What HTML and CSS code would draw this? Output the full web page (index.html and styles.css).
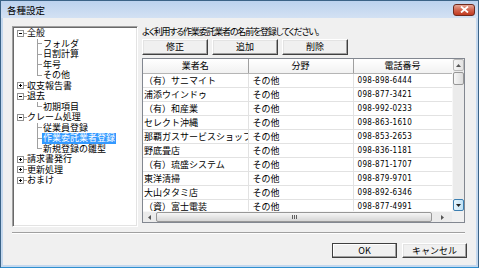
FILE: index.html
```html
<!DOCTYPE html>
<html lang="ja">
<head>
    <meta charset="UTF-8">
    <title>各種設定</title>
    <link rel="stylesheet" href="styles.css">
</head>
<body>
<div class="window">
    <div class="titlebar">
        <span class="title">各種設定</span>
        <span class="close">
            <svg width="9" height="7" viewBox="0 0 9 7"><path d="M1 0.5 L8 6.5 M8 0.5 L1 6.5" stroke="#fff" stroke-width="1.8"/></svg>
        </span>
    </div>
    <div class="client">
        <div class="main">
            <!-- settings tree -->
            <div class="tree">
                <div class="tree-row root"><span class="toggle minus"></span><span class="dash"></span><span>全般</span></div>
                <div class="tree-row child"><span class="branch"></span><span>フォルダ</span></div>
                <div class="tree-row child"><span class="branch"></span><span>日割計算</span></div>
                <div class="tree-row child"><span class="branch"></span><span>年号</span></div>
                <div class="tree-row child"><span class="branch last"></span><span>その他</span></div>
                <div class="tree-row root"><span class="toggle plus"></span><span class="dash"></span><span>収支報告書</span></div>
                <div class="tree-row root"><span class="toggle minus"></span><span class="dash"></span><span>退去</span></div>
                <div class="tree-row child"><span class="branch last"></span><span>初期項目</span></div>
                <div class="tree-row root"><span class="toggle minus"></span><span class="dash"></span><span>クレーム処理</span></div>
                <div class="tree-row child"><span class="branch"></span><span>従業員登録</span></div>
                <div class="tree-row child"><span class="branch"></span><span class="selected">作業委託業者登録</span></div>
                <div class="tree-row child"><span class="branch last"></span><span>新規登録の雛型</span></div>
                <div class="tree-row root"><span class="toggle plus"></span><span class="dash"></span><span>請求書発行</span></div>
                <div class="tree-row root"><span class="toggle plus"></span><span class="dash"></span><span>更新処理</span></div>
                <div class="tree-row root"><span class="toggle plus"></span><span class="dash"></span><span>おまけ</span></div>
            </div>

            <div class="panel">
                <p class="hint">よく利用する作業委託業者の名前を登録してください。</p>
                <div class="toolbar">
                    <button>修正</button>
                    <button>追加</button>
                    <button>削除</button>
                </div>
                <div class="list">
                    <div class="list-view">
                        <table>
                            <colgroup>
                                <col class="col-name">
                                <col class="col-field">
                                <col class="col-tel">
                            </colgroup>
                            <thead>
                            <tr><th>業者名</th><th>分野</th><th>電話番号</th></tr>
                            </thead>
                            <tbody>
                            <tr><td>（有）サニマイト</td><td>その他</td><td class="tel">098-898-6444</td></tr>
                            <tr><td>浦添ウインドゥ</td><td>その他</td><td class="tel">098-877-3421</td></tr>
                            <tr><td>（有）和産業</td><td>その他</td><td class="tel">098-992-0233</td></tr>
                            <tr><td>セレクト沖縄</td><td>その他</td><td class="tel">098-863-1610</td></tr>
                            <tr><td>那覇ガスサービスショップ</td><td>その他</td><td class="tel">098-853-2653</td></tr>
                            <tr><td>野底畳店</td><td>その他</td><td class="tel">098-836-1181</td></tr>
                            <tr><td>（有）琉盛システム</td><td>その他</td><td class="tel">098-871-1707</td></tr>
                            <tr><td>東洋清掃</td><td>その他</td><td class="tel">098-879-9701</td></tr>
                            <tr><td>大山タタミ店</td><td>その他</td><td class="tel">098-892-6346</td></tr>
                            <tr><td>（資）富士電装</td><td>その他</td><td class="tel">098-877-4991</td></tr>
                            </tbody>
                        </table>
                    </div>
                    <div class="vscroll">
                        <span class="sb-btn"><svg width="5" height="3" viewBox="0 0 5 3"><path d="M0 3 L2.5 0 L5 3Z" fill="#555"/></svg></span>
                        <span class="sb-thumb-v"></span>
                        <span class="sb-track"></span>
                        <span class="sb-btn hot"><svg width="5" height="3" viewBox="0 0 5 3"><path d="M0 0 L5 0 L2.5 3Z" fill="#222"/></svg></span>
                    </div>
                    <div class="hscroll">
                        <span class="sb-arrow"><svg width="3" height="5" viewBox="0 0 3 5"><path d="M3 0 L3 5 L0 2.5Z" fill="#555"/></svg></span>
                        <span class="sb-thumb-h"><span class="grip"></span></span>
                        <span class="sb-arrow"><svg width="3" height="5" viewBox="0 0 3 5"><path d="M0 0 L0 5 L3 2.5Z" fill="#555"/></svg></span>
                    </div>
                    <div class="corner"></div>
                </div>
            </div>
        </div>

        <div class="separator"></div>

        <div class="actions">
            <button class="default">OK</button>
            <button>キャンセル</button>
        </div>
    </div>
</div>
</body>
</html>
```

FILE: styles.css
```css
* {
    box-sizing: border-box;
}

body {
    margin: 0;
    font-family: "Noto Sans CJK JP", "Liberation Sans", sans-serif;
    font-size: 9px;
    color: #000;
    background: #fff;
}

.window {
    width: 479px;
    height: 268px;
    display: flex;
    flex-direction: column;
    background: #c4d8ee;
    border: 1px solid #3b6387;
    border-bottom-color: #2f8fcf;
    padding: 0 2px 2px;
}

.titlebar {
    height: 17px;
    margin: 0 -2px;
    padding: 0 3px 0 6px;
    display: flex;
    align-items: center;
    justify-content: space-between;
    background: linear-gradient(#bcd2ee, #d3e1f3);
}

.title {
    font-size: 9.5px;
    line-height: 10px;
}

.close {
    width: 22px;
    height: 12px;
    display: flex;
    align-items: center;
    justify-content: center;
    border: 1px solid #6e2a1e;
    border-radius: 3px;
    background: linear-gradient(#e6a797, #d2644e 50%, #c1391f);
}

.client {
    flex: 1;
    background: #f0f0f0;
    padding: 8px 9px 0 9px;
    display: flex;
    flex-direction: column;
}

.main {
    display: flex;
    gap: 4px;
    height: 201px;
}

/* tree */
.tree {
    width: 126px;
    background: #fff;
    border: 1px solid;
    border-color: #a0a0a0 #fff #fff #a0a0a0;
    box-shadow: inset 1px 1px #696969, inset -1px -1px #e3e3e3;
    padding-top: 1px;
}

.tree-row {
    height: 10.5px;
    line-height: 10.5px;
    display: flex;
    align-items: center;
    white-space: nowrap;
}

.tree-row.root {
    padding-left: 4px;
}

.tree-row.child {
    padding-left: 24px;
}

.toggle {
    width: 7px;
    height: 7px;
    border: 1px solid #919191;
    background-color: #fff;
}

.toggle.minus {
    background-image: linear-gradient(#000, #000);
    background-size: 3px 1px;
    background-position: center;
    background-repeat: no-repeat;
}

.toggle.plus {
    background-image: linear-gradient(#000, #000), linear-gradient(#000, #000);
    background-size: 3px 1px, 1px 3px;
    background-position: center, center;
    background-repeat: no-repeat;
}

.dash {
    width: 3px;
    height: 1px;
    background: #a0a0a0;
}

.branch {
    width: 5px;
    margin-right: 1px;
    align-self: stretch;
    background:
        linear-gradient(#a0a0a0, #a0a0a0) 0 0 / 1px 100% no-repeat,
        linear-gradient(#a0a0a0, #a0a0a0) 0 50% / 100% 1px no-repeat;
}

.branch.last {
    background:
        linear-gradient(#a0a0a0, #a0a0a0) 0 0 / 1px 50% no-repeat,
        linear-gradient(#a0a0a0, #a0a0a0) 0 50% / 100% 1px no-repeat;
}

.selected {
    background: #3399ff;
    color: #fff;
    padding: 0 1px;
    margin-left: -1px;
}

/* right panel */
.panel {
    width: 323px;
    display: flex;
    flex-direction: column;
}

.hint {
    margin: 1px 0 0;
    height: 10px;
    line-height: 10px;
    white-space: nowrap;
    font-feature-settings: "palt";
    letter-spacing: -1.2px;
}

.toolbar {
    display: flex;
    gap: 4px;
    margin-top: 2px;
}

button {
    width: 66px;
    height: 16px;
    padding: 0;
    font: inherit;
    font-size: 9px;
    line-height: 12px;
    color: #000;
    background: #f0f0f0;
    border: 1px solid;
    border-color: #fff #404040 #404040 #fff;
    box-shadow: inset -1px -1px #a0a0a0, inset 1px 1px #e3e3e3;
}

/* list view */
.list {
    margin-top: 3px;
    height: 165px;
    display: grid;
    grid-template-columns: 1fr 12px;
    grid-template-rows: 1fr 11px;
    border: 1px solid #828790;
    background: #fff;
}

.list-view {
    overflow: hidden;
}

table {
    width: 309px;
    table-layout: fixed;
    border-collapse: collapse;
}

.col-name {
    width: 105px;
}

.col-field {
    width: 105px;
}

.col-tel {
    width: 99px;
}

th {
    height: 14px;
    padding: 0;
    font-weight: normal;
    line-height: 13px;
    background: linear-gradient(#fff, #f1f1f1);
    border-right: 1px solid #a0a0a0;
    border-bottom: 1px solid #b5b5b5;
}

td {
    height: 14px;
    padding: 0 4px;
    line-height: 13px;
    white-space: nowrap;
    overflow: hidden;
    border-right: 1px solid #e2e2e2;
    border-bottom: 1px solid #e2e2e2;
}

td:first-child {
    padding-left: 1px;
    padding-right: 0;
}

.tel {
    font-family: "DejaVu Sans Condensed", "Liberation Sans Narrow", sans-serif;
    font-size: 8px;
    letter-spacing: 0.3px;
}

/* scrollbars */
.vscroll {
    display: flex;
    flex-direction: column;
    background: #ebebeb;
    border-left: 1px solid #f7f7f7;
}

.sb-btn {
    height: 12px;
    display: flex;
    align-items: center;
    justify-content: center;
    border: 1px solid #b9b9b9;
    border-radius: 2px;
    background: linear-gradient(90deg, #f5f5f5, #e3e3e3);
}

.sb-btn.hot {
    border-color: #3c7fb1;
    background: linear-gradient(90deg, #e5f4fc, #c0e2f6);
}

.sb-thumb-v {
    height: 13px;
    margin-top: 1px;
    border: 1px solid #979797;
    border-radius: 2px;
    background: linear-gradient(90deg, #f6f6f6, #dcdcdc);
}

.sb-track {
    flex: 1;
}

.hscroll {
    display: flex;
    align-items: stretch;
    background: #ebebeb;
    border-top: 1px solid #f7f7f7;
}

.sb-arrow {
    width: 12px;
    display: flex;
    align-items: center;
    justify-content: center;
}

.sb-arrow:last-child {
    width: 20px;
}

.sb-thumb-h {
    flex: 1;
    margin-left: 1px;
    display: flex;
    align-items: center;
    justify-content: center;
    border: 1px solid #979797;
    border-radius: 2px;
    background: linear-gradient(#f6f6f6, #d6d6d6);
}

.grip {
    width: 5px;
    height: 4px;
    background: repeating-linear-gradient(90deg, #606060 0 1px, transparent 1px 2px);
}

.corner {
    background: #f0f0f0;
}

/* bottom */
.separator {
    margin: 5px 2px 0 0;
    height: 2px;
    border-top: 1px solid #a0a0a0;
    border-bottom: 1px solid #fff;
}

.actions {
    display: flex;
    justify-content: flex-end;
    gap: 5px;
    margin-top: 9px;
}

.actions button {
    width: 65px;
    height: 15px;
}

.actions .default {
    border-color: #404040;
    box-shadow: inset -1px -1px #a0a0a0, inset 1px 1px #fff;
}
```
